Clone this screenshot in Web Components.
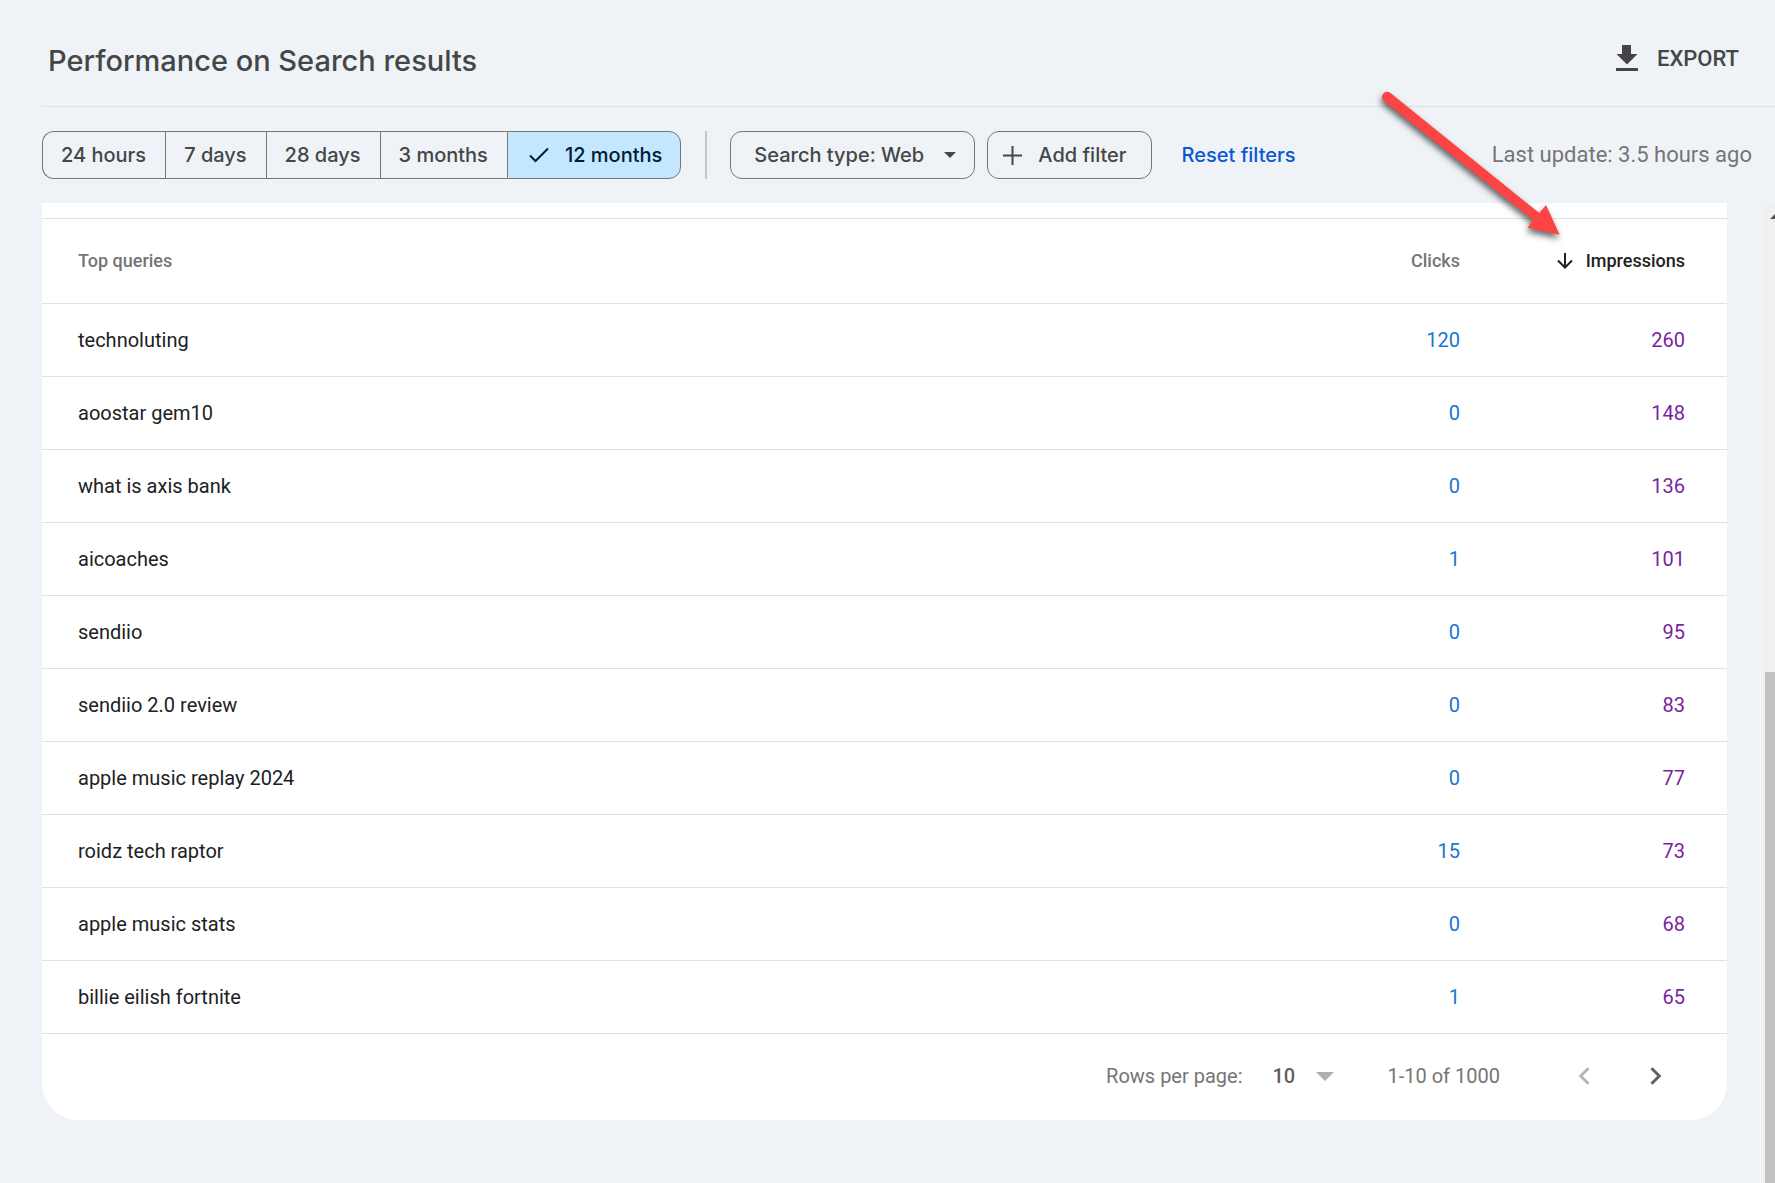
<!DOCTYPE html>
<html lang="en">
<head>
<meta charset="utf-8">
<title>Performance on Search results</title>
<style>
body {
  margin: 0;
  background: #eff3f8;
  font-family: Roboto, "Liberation Sans", sans-serif;
  --display-font: Inter, Roboto, sans-serif;
}
</style>
</head>
<body>

<perf-page>
  <perf-header slot="header">Performance on Search results</perf-header>
  <perf-toolbar slot="toolbar">
    <perf-range selected="12 months" options="24 hours,7 days,28 days,3 months,12 months"></perf-range>
    <perf-filters></perf-filters>
    <span slot="status">Last update: 3.5 hours ago</span>
  </perf-toolbar>
  <perf-card>
    <perf-table></perf-table>
    <perf-pager slot="footer"></perf-pager>
  </perf-card>
  <perf-scrollbar slot="scroll"></perf-scrollbar>
  <perf-arrow slot="overlay"></perf-arrow>
</perf-page>

<template id="page">
<style>
:host {
  display: flex;
  flex-direction: column;
  position: relative;
  min-height: 100vh;
  overflow: hidden;
}
.body {
  display: flex;
  flex: 1;
}
main {
  flex: 1;
  padding: 0 36px 60px 42px;
}
</style>
<slot name="header"></slot>
<slot name="toolbar"></slot>
<div class="body">
  <main><slot></slot></main>
  <slot name="scroll"></slot>
</div>
<slot name="overlay"></slot>
</template>

<template id="header">
<style>
:host {
  display: flex;
  align-items: center;
  justify-content: space-between;
  box-sizing: border-box;
  height: 107px;
  margin-left: 42px;
  padding: 15px 36px 0 6px;
  border-bottom: 1px solid #dde1e3;
  color: #444746;
}
h1 {
  margin: 0;
  font: 500 29px/40px var(--display-font);
}
button {
  display: flex;
  align-items: center;
  gap: 19px;
  padding: 0 0 4px;
  border: 0;
  background: none;
  color: inherit;
  font: 500 22px/28px Roboto, sans-serif;
}
svg {
  display: block;
}
</style>
<h1><slot></slot></h1>
<button type="button">
  <svg width="22" height="28" viewBox="0 0 22 28" fill="#444"><path d="M6 0h9v9h6.500L11 19.500 0.500 9H6zM0 23h22v3H0z"/></svg>
  EXPORT
</button>
</template>

<template id="toolbar">
<style>
:host {
  display: flex;
  align-items: center;
  padding: 24px 23px 24px 42px;
}
.status {
  margin-left: auto;
  color: #757575;
  font-size: 22px;
  line-height: 28px;
}
</style>
<slot></slot>
<div class="status"><slot name="status"></slot></div>
</template>

<template id="range">
<style>
:host {
  display: flex;
  height: 48px;
}
button {
  display: flex;
  align-items: center;
  gap: 16px;
  margin: 0;
  padding: 0 19px 0 18px;
  border: 1px solid #747775;
  border-right-width: 0;
  background: none;
  color: #444746;
  font: 500 20px/28px var(--display-font);
}
button:first-of-type {
  border-radius: 12px 0 0 12px;
}
button:last-of-type {
  border-right-width: 1px;
  border-radius: 0 12px 12px 0;
}
button[aria-pressed="true"] {
  padding-left: 21px;
  padding-right: 18px;
  background: #c2e7ff;
  color: #001d35;
}
</style>
</template>

<template id="filters">
<style>
:host {
  display: flex;
  align-items: center;
  gap: 12px;
  margin-left: 24px;
  padding-left: 23px;
  border-left: 2px solid #c4c7c5;
  height: 48px;
}
button, select, .type {
  box-sizing: border-box;
  height: 48px;
  border: 1px solid #747775;
  border-radius: 12px;
  background: none;
  color: #444746;
  font: 500 20px/28px var(--display-font);
}
.type {
  display: flex;
  align-items: center;
  position: relative;
}
select {
  appearance: none;
  height: 46px;
  padding: 0 50px 0 23px;
  border: 0;
}
.type svg {
  position: absolute;
  right: 18px;
  pointer-events: none;
}
button {
  display: flex;
  align-items: center;
  gap: 16px;
  padding: 0 24px 0 15px;
}
a {
  margin-left: 18px;
  color: #0b57d0;
  font: 500 20px/28px var(--display-font);
  text-decoration: none;
}
</style>
<div class="type">
  <select aria-label="Search type"><option>Search type: Web</option></select>
  <svg width="12" height="6" viewBox="0 0 12 6" fill="#444746"><path d="M0 0h12L6 6z"/></svg>
</div>
<button type="button">
  <svg width="19" height="19" viewBox="0 0 19 19" stroke="#444746" stroke-width="2"><path d="M9.500 0v19M0 9.500h19"/></svg>
  Add filter
</button>
<a href="#reset">Reset filters</a>
</template>

<template id="card">
<style>
:host {
  display: block;
  padding-top: 15px;
  border-radius: 0 0 36px 36px;
  background: #fff;
}
</style>
<slot></slot>
<slot name="footer"></slot>
</template>

<template id="table">
<style>
:host {
  display: block;
}
table {
  width: 100%;
  table-layout: fixed;
  border-collapse: separate;
  border-spacing: 0;
  border-top: 1px solid #e0e0e0;
}
th, td {
  box-sizing: border-box;
  padding: 0;
  border-bottom: 1px solid #e0e0e0;
  text-align: right;
}
th {
  height: 85px;
  color: #757575;
  font-size: 18px;
  line-height: 24px;
  font-weight: 500;
}
td {
  height: 73px;
  color: #202124;
  font-size: 20px;
}
th:first-child, td:first-child {
  padding-left: 36px;
  text-align: left;
}
th:last-child, td:last-child {
  padding-right: 42px;
}
.clicks {
  width: 300px;
}
.impressions {
  width: 267px;
}
td:nth-child(2) {
  color: #1976d2;
}
td:nth-child(3) {
  color: #7b1fa2;
}
button {
  display: flex;
  align-items: center;
  gap: 13px;
  margin-left: auto;
  padding: 0;
  border: 0;
  background: none;
  color: inherit;
  font: inherit;
}
th[aria-sort] {
  color: #212121;
}
</style>
<table>
  <thead>
    <tr>
      <th scope="col">Top queries</th>
      <th scope="col" class="clicks"><button type="button">Clicks</button></th>
      <th scope="col" class="impressions" aria-sort="descending">
        <button type="button">
          <svg width="16" height="16" viewBox="0 0 16 16" fill="none" stroke="#212121" stroke-width="2"><path d="M8 0v14.500M1 7.500l7 7 7-7"/></svg>
          Impressions
        </button>
      </th>
    </tr>
  </thead>
  <tbody></tbody>
</table>
</template>

<template id="pager">
<style>
:host {
  display: flex;
  align-items: center;
  justify-content: flex-end;
  height: 84px;
  padding: 0 35px 2px 0;
  color: #757575;
  font-size: 20px;
}
label {
  margin-right: 30px;
}
.size {
  display: flex;
  align-items: center;
  position: relative;
  margin-right: 54px;
}
select {
  appearance: none;
  padding: 0 38px 0 0;
  border: 0;
  background: none;
  color: #616161;
  font: 500 20px/28px Roboto, sans-serif;
}
.size svg {
  position: absolute;
  right: 0;
  pointer-events: none;
}
.count {
  margin-right: 48px;
}
button {
  width: 72px;
  height: 72px;
  padding: 0;
  border: 0;
  background: none;
  color: #616161;
}
button:disabled {
  color: #b8b8b8;
}
button svg {
  display: block;
  margin: auto;
}
</style>
<label for="size">Rows per page:</label>
<div class="size">
  <select id="size"><option>10</option></select>
  <svg width="18" height="9" viewBox="0 0 18 9" fill="#b0b0b0"><path d="M0 0h18L9 9z"/></svg>
</div>
<span class="count">1-10 of 1000</span>
<button type="button" disabled aria-label="Previous page">
  <svg width="12" height="18" viewBox="0 0 12 18" fill="none" stroke="currentColor" stroke-width="3"><path d="M10.500 1.200L2.700 9l7.800 7.800"/></svg>
</button>
<button type="button" aria-label="Next page">
  <svg width="12" height="18" viewBox="0 0 12 18" fill="none" stroke="currentColor" stroke-width="3"><path d="M1.500 1.200L9.300 9l-7.800 7.800"/></svg>
</button>
</template>

<template id="scrollbar">
<style>
:host {
  display: flex;
  flex-direction: column;
  width: 12px;
  background: #f0f0f0;
}
svg {
  display: block;
  margin: 10px 0 0 7px;
}
.gap {
  flex: 453;
}
.thumb {
  flex: 511;
  margin-left: 2px;
  background: #c1c1c1;
}
</style>
<svg width="5" height="6" viewBox="0 0 5 6" fill="#505050"><path d="M0 6L5 1v5z"/></svg>
<div class="gap"></div>
<div class="thumb"></div>
</template>

<template id="arrow">
<style>
:host {
  position: absolute;
  top: 85px;
  right: 203px;
  pointer-events: none;
}
svg {
  display: block;
  overflow: visible;
  filter: drop-shadow(-1px 4px 3px rgba(0, 0, 0, .6));
}
</style>
<svg width="192" height="160" viewBox="0 0 192 160" fill="#fd4444">
  <path d="M10.500 8a5.200 5.200 0 1 0-6.600 8.100L153 135l-5.300 7.700 32 7L166 120l-6.700 8z"/>
</svg>
</template>

<script>
const queries = [
  ["technoluting", 120, 260],
  ["aoostar gem10", 0, 148],
  ["what is axis bank", 0, 136],
  ["aicoaches", 1, 101],
  ["sendiio", 0, 95],
  ["sendiio 2.0 review", 0, 83],
  ["apple music replay 2024", 0, 77],
  ["roidz tech raptor", 15, 73],
  ["apple music stats", 0, 68],
  ["billie eilish fortnite", 1, 65]
]

const check = `<svg width="20" height="16" viewBox="0 0 20 16" fill="none" stroke="currentColor" stroke-width="2"><path d="M1 8.500l5.500 5.500L19 1.500"/></svg>`

// attaches a shadow root filled from the template with the given id
class PerfElement extends HTMLElement {
  constructor() {
    super()
    const template = document.getElementById(this.localName.replace("perf-", ""))
    this.attachShadow({mode: "open"})
    this.shadowRoot.appendChild(template.content.cloneNode(true))
  }
}

class PerfRange extends PerfElement {
  connectedCallback() {
    const selected = this.getAttribute("selected")
    this.getAttribute("options").split(",").forEach(option => {
      const button = document.createElement("button")
      button.type = "button"
      button.innerHTML = (option === selected ? check : "") + option
      button.setAttribute("aria-pressed", option === selected)
      this.shadowRoot.appendChild(button)
    })
  }
}

class PerfTable extends PerfElement {
  connectedCallback() {
    const tbody = this.shadowRoot.querySelector("tbody")
    queries.forEach(row => {
      const tr = tbody.insertRow()
      row.forEach(value => {
        tr.insertCell().textContent = value
      })
    })
  }
}

customElements.define("perf-page", class extends PerfElement {})
customElements.define("perf-header", class extends PerfElement {})
customElements.define("perf-toolbar", class extends PerfElement {})
customElements.define("perf-range", PerfRange)
customElements.define("perf-filters", class extends PerfElement {})
customElements.define("perf-card", class extends PerfElement {})
customElements.define("perf-table", PerfTable)
customElements.define("perf-pager", class extends PerfElement {})
customElements.define("perf-scrollbar", class extends PerfElement {})
customElements.define("perf-arrow", class extends PerfElement {})
</script>
</body>
</html>
